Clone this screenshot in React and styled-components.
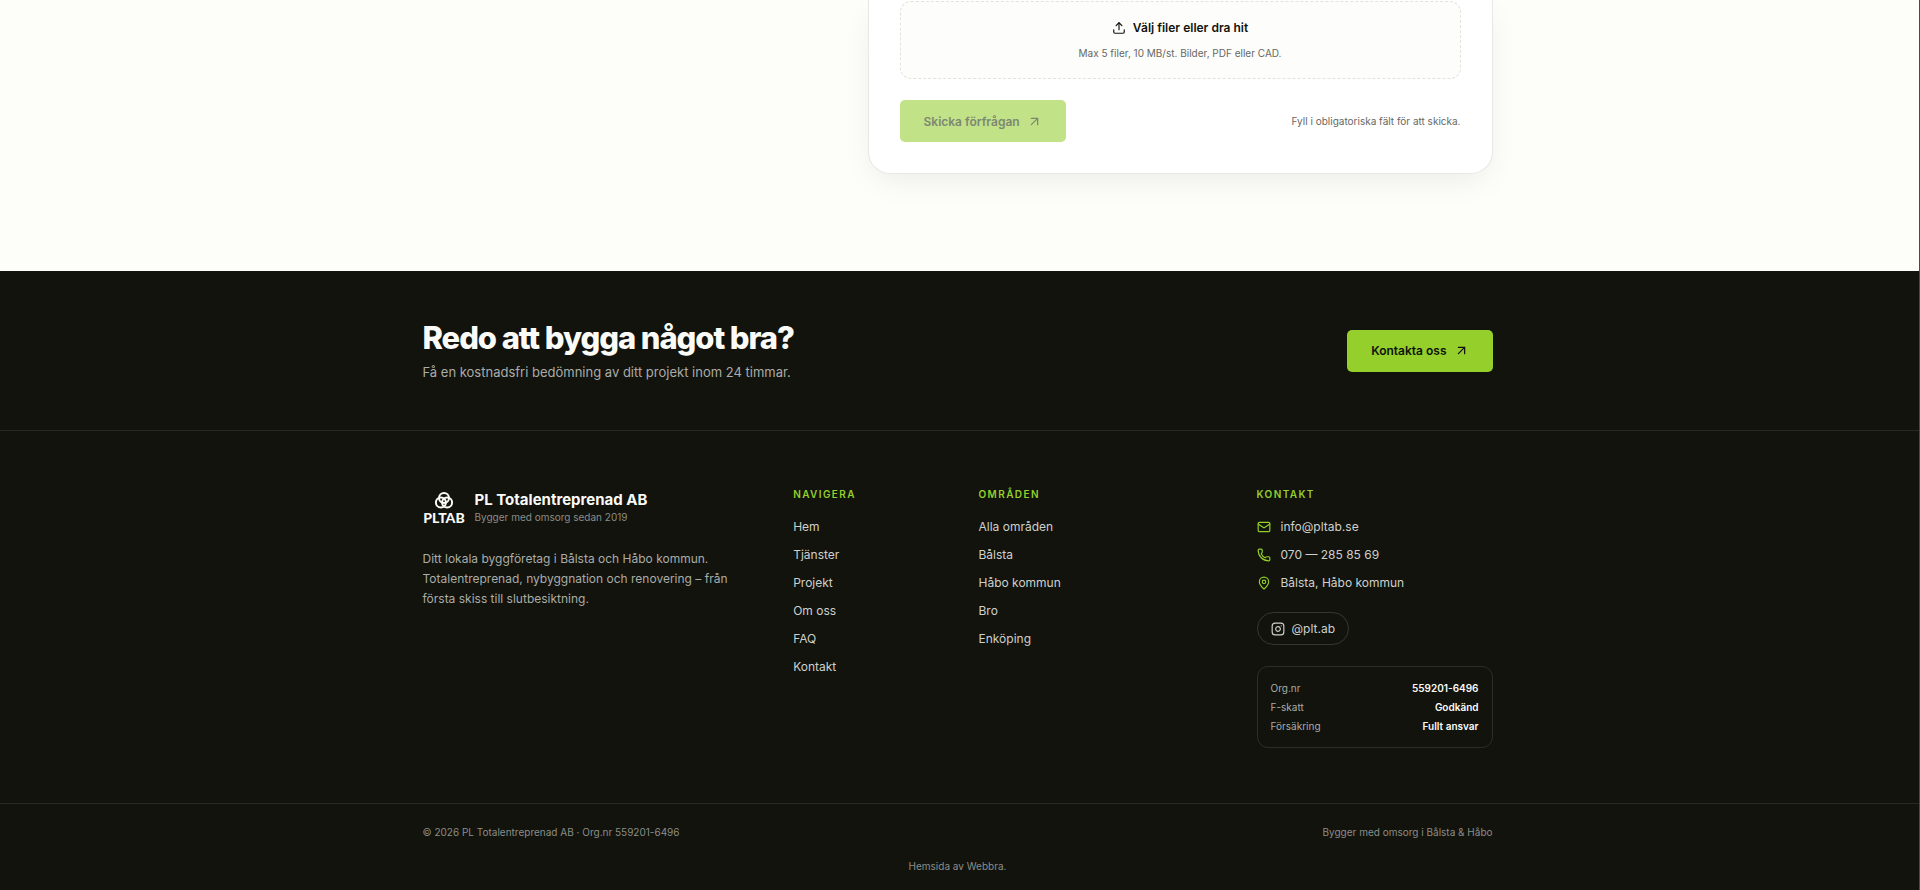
import React from 'react'
import styled, { createGlobalStyle, css } from 'styled-components'
import { ArrowUpRight, Instagram, Mail, MapPin, Phone, Upload } from 'lucide-react'

const navLinks = ['Hem', 'Tjänster', 'Projekt', 'Om oss', 'FAQ', 'Kontakt']
const areaLinks = ['Alla områden', 'Bålsta', 'Håbo kommun', 'Bro', 'Enköping']
const contactLinks = [
    { icon: Mail, label: 'info@pltab.se' },
    { icon: Phone, label: '070 — 285 85 69' },
    { icon: MapPin, label: 'Bålsta, Håbo kommun' },
]
const companyFacts = [
    { label: 'Org.nr', value: '559201-6496' },
    { label: 'F-skatt', value: 'Godkänd' },
    { label: 'Försäkring', value: 'Fullt ansvar' },
]

function Logo() {
    return (
        <LogoMark viewBox="0 0 42 32" role="img" aria-label="PLTAB">
            <g fill="none" stroke="currentColor" strokeWidth="2">
                <circle cx="21" cy="6" r="5" />
                <circle cx="17.9" cy="10.6" r="5" />
                <circle cx="24.1" cy="10.6" r="5" />
            </g>
            <text x="21" y="31" textAnchor="middle">PLTAB</text>
        </LogoMark>
    )
}

function LinkColumn({ title, links, span }) {
    return (
        <Column as="nav" $span={span} aria-label={title}>
            <ColumnTitle>{title}</ColumnTitle>
            <LinkList>
                {links.map((link) => (
                    <li key={link}>
                        <FooterLink href="#">{link}</FooterLink>
                    </li>
                ))}
            </LinkList>
        </Column>
    )
}

function App() {
    return (
        <>
            <GlobalStyle />
            <Page>
                <FormSection>
                    <Container>
                        <FormCard>
                            <DropZone type="button">
                                <DropTitle>
                                    <Upload size={14} />
                                    Välj filer eller dra hit
                                </DropTitle>
                                <DropHint>Max 5 filer, 10 MB/st. Bilder, PDF eller CAD.</DropHint>
                            </DropZone>
                            <FormActions>
                                <SubmitButton type="submit" disabled>
                                    Skicka förfrågan
                                    <ArrowUpRight size={15} />
                                </SubmitButton>
                                <FormNote>Fyll i obligatoriska fält för att skicka.</FormNote>
                            </FormActions>
                        </FormCard>
                    </Container>
                </FormSection>

                <Footer>
                    <CtaBand>
                        <CtaInner>
                            <div>
                                <CtaTitle>Redo att bygga något bra?</CtaTitle>
                                <CtaText>Få en kostnadsfri bedömning av ditt projekt inom 24 timmar.</CtaText>
                            </div>
                            <CtaLink href="#">
                                Kontakta oss
                                <ArrowUpRight size={15} />
                            </CtaLink>
                        </CtaInner>
                    </CtaBand>

                    <FooterMain>
                        <FooterGrid>
                            <Column $span={4}>
                                <Brand>
                                    <Logo />
                                    <div>
                                        <BrandName>PL Totalentreprenad AB</BrandName>
                                        <BrandTagline>Bygger med omsorg sedan 2019</BrandTagline>
                                    </div>
                                </Brand>
                                <About>
                                    Ditt lokala byggföretag i Bålsta och Håbo kommun. Totalentreprenad,
                                    nybyggnation och renovering – från första skiss till slutbesiktning.
                                </About>
                            </Column>
                            <LinkColumn title="Navigera" links={navLinks} span={2} />
                            <LinkColumn title="Områden" links={areaLinks} span={3} />
                            <Column $span={3}>
                                <ColumnTitle>Kontakt</ColumnTitle>
                                <LinkList>
                                    {contactLinks.map(({ icon: Icon, label }) => (
                                        <li key={label}>
                                            <ContactLink href="#">
                                                <Icon size={14} />
                                                {label}
                                            </ContactLink>
                                        </li>
                                    ))}
                                </LinkList>
                                <SocialLink href="#">
                                    <Instagram size={14} />
                                    @plt.ab
                                </SocialLink>
                                <Facts>
                                    {companyFacts.map((fact) => (
                                        <Fact key={fact.label}>
                                            <dt>{fact.label}</dt>
                                            <dd>{fact.value}</dd>
                                        </Fact>
                                    ))}
                                </Facts>
                            </Column>
                        </FooterGrid>
                    </FooterMain>

                    <Legal>
                        <LegalRow>
                            <span>© 2026 PL Totalentreprenad AB · Org.nr 559201-6496</span>
                            <span>Bygger med omsorg i Bålsta & Håbo</span>
                        </LegalRow>
                        <Credit>
                            Hemsida av <a href="#">Webbra.</a>
                        </Credit>
                    </Legal>
                </Footer>
            </Page>
        </>
    )
}

export default App

const GlobalStyle = createGlobalStyle`
    *, *::before, *::after {
        box-sizing: border-box;
    }
    body {
        margin: 0;
        background: #11130c;
        font-family: Inter, sans-serif;
        color: #11130c;
        -webkit-font-smoothing: antialiased;
    }
    h2, h3, p, ul, dl, dd {
        margin: 0;
        padding: 0;
    }
    a {
        color: inherit;
        text-decoration: none;
    }
    button {
        font: inherit;
        color: inherit;
    }
`

const Page = styled.div`
    border-right: 1px solid #4a4b47;
`

const Container = styled.div`
    max-width: 1118px;
    margin: 0 auto;
    padding: 0 24px;
`

const FormSection = styled.main`
    padding: 0 4px 97px 0;
    background: #fdfdf9;
`

const FormCard = styled.form`
    width: 625px;
    max-width: 100%;
    margin-left: auto;
    padding: 1px 31px 31px;
    background: #fff;
    border: 1px solid #e8e9e4;
    border-top: 0;
    border-radius: 0 0 22px 22px;
    box-shadow: 0 10px 32px -6px rgba(17, 19, 12, .08);
`

const DropZone = styled.button`
    display: flex;
    flex-direction: column;
    align-items: center;
    gap: 8px;
    width: 100%;
    padding: 17px 16px;
    background: #fdfdfb;
    border: 1px dashed #e2e3de;
    border-radius: 11px;
`

const DropTitle = styled.span`
    display: flex;
    align-items: center;
    gap: 7px;
    font-size: 12px;
    line-height: 18px;
    font-weight: 600;
`

const DropHint = styled.span`
    font-size: 10px;
    line-height: 16px;
    color: #666862;
`

const FormActions = styled.div`
    display: flex;
    align-items: center;
    justify-content: space-between;
    margin-top: 21px;
`

const buttonStyles = css`
    display: inline-flex;
    align-items: center;
    gap: 7px;
    height: 42px;
    padding: 0 24px;
    border: 0;
    border-radius: 5px;
    background: #94cf2b;
    font-size: 12px;
    font-weight: 600;
    color: #11130c;
`

const SubmitButton = styled.button`
    ${buttonStyles}
    background: #c1e287;
    color: #7d8873;
`

const CtaLink = styled.a`
    ${buttonStyles}
`

const FormNote = styled.p`
    font-size: 10px;
    color: #666862;
`

const Footer = styled.footer`
    background: #11130c;
    color: #fafaf7;
`

const CtaBand = styled.div`
    padding: 47px 4px 47px 0;
    border-bottom: 1px solid #272922;
`

const CtaInner = styled(Container)`
    display: flex;
    align-items: center;
    justify-content: space-between;
`

const CtaTitle = styled.h2`
    font-size: 31px;
    line-height: 40px;
    font-weight: 800;
    letter-spacing: -0.035em;
`

const CtaText = styled.p`
    margin-top: 3px;
    font-size: 13px;
    line-height: 22px;
    color: #abaca8;
`

const FooterMain = styled.div`
    padding: 56px 4px 55px 0;
`

const FooterGrid = styled(Container)`
    display: grid;
    grid-template-columns: repeat(12, 1fr);
    column-gap: 42px;
`

const Column = styled.div`
    grid-column: span ${(props) => props.$span};
`

const Brand = styled.div`
    display: flex;
    align-items: center;
    gap: 10px;
    padding-top: 4px;
`

const LogoMark = styled.svg`
    width: 42px;
    height: 32px;
    overflow: visible;
    color: #fafaf7;

    text {
        fill: currentColor;
        font: 900 14px Lato, sans-serif;
    }
`

const BrandName = styled.div`
    font-size: 15px;
    line-height: 18px;
    font-weight: 700;
`

const BrandTagline = styled.div`
    font-size: 10px;
    line-height: 16px;
    color: #8c8d88;
`

const About = styled.p`
    margin-top: 24px;
    font-size: 12px;
    line-height: 20px;
    color: #abaca8;
`

const ColumnTitle = styled.h3`
    font-size: 10px;
    line-height: 14px;
    font-weight: 600;
    letter-spacing: 0.14em;
    text-transform: uppercase;
    color: #94cf2b;
`

const LinkList = styled.ul`
    display: grid;
    gap: 10px;
    margin-top: 17px;
    list-style: none;
`

const FooterLink = styled.a`
    display: block;
    font-size: 12px;
    line-height: 18px;
    color: #cfd0cd;
`

const ContactLink = styled(FooterLink)`
    display: flex;
    align-items: center;
    gap: 10px;

    svg {
        color: #94cf2b;
    }
`

const SocialLink = styled.a`
    display: inline-flex;
    align-items: center;
    gap: 7px;
    height: 33px;
    margin-top: 20px;
    padding: 0 13px;
    border: 1px solid #353730;
    border-radius: 17px;
    font-size: 12px;
    color: #cfd0cd;
`

const Facts = styled.dl`
    display: grid;
    gap: 3px;
    margin-top: 21px;
    padding: 13px;
    border: 1px solid #2b2d26;
    border-radius: 11px;
`

const Fact = styled.div`
    display: flex;
    justify-content: space-between;
    font-size: 10px;
    line-height: 16px;
    color: #abaca8;

    dd {
        font-weight: 600;
        color: #fafaf7;
    }
`

const Legal = styled.div`
    padding: 20px 4px 16px 0;
    border-top: 1px solid #272922;
    font-size: 10px;
    line-height: 16px;
    color: #8c8d88;
`

const LegalRow = styled(Container)`
    display: flex;
    justify-content: space-between;
`

const Credit = styled.p`
    margin-top: 18px;
    text-align: center;
`
